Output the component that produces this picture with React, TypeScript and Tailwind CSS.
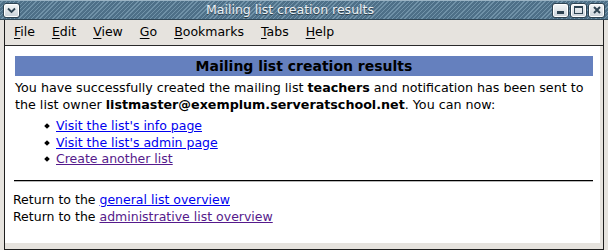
import React from 'react';

const menus = ['File', 'Edit', 'View', 'Go', 'Bookmarks', 'Tabs', 'Help'];

const links = [
  { label: "Visit the list's info page", visited: false },
  { label: "Visit the list's admin page", visited: false },
  { label: 'Create another list', visited: true },
];

function TitleButton({ children }: { children: React.ReactNode }) {
  return (
    <div className="w-[17px] h-[15px] rounded-[3px] border border-[#2e4352] bg-gradient-to-b from-[#f4f6f8] to-[#c9d1d8] flex items-center justify-center shadow-[inset_0_0_0_1px_#ffffff]">
      {children}
    </div>
  );
}

export default function App() {
  return (
    <div className="w-[608px] h-[250px] bg-[#e6e3de] overflow-hidden font-['DejaVu_Sans',sans-serif] text-black">
      {/* title bar */}
      <div className="h-[20px] flex items-center px-[3px] bg-[repeating-linear-gradient(135deg,#4e7088_0px,#4e7088_2px,#7092a8_2px,#7092a8_3px)] shadow-[inset_0_1px_0_#9bb4c4,inset_0_-1px_0_#2f4656]">
        <TitleButton>
          <svg width="9" height="7" viewBox="0 0 9 7">
            <path d="M1 1.5 L4.5 5 L8 1.5" stroke="#2e4352" strokeWidth="1.8" fill="none" />
          </svg>
        </TitleButton>
        <div className="flex-1 text-center text-[12.5px] text-[#eef3f6] [text-shadow:0_1px_0_#2c3e4a] leading-none pl-[8px]">
          Mailing list creation results
        </div>
        <div className="flex gap-[1px]">
          <TitleButton>
            <div className="w-[7px] h-[3px] bg-[#2e4352] mt-[5px]" />
          </TitleButton>
          <TitleButton>
            <div className="w-[9px] h-[8px] border border-[#2e4352] border-t-[2px]" />
          </TitleButton>
          <TitleButton>
            <svg width="8" height="8" viewBox="0 0 8 8">
              <path d="M1 1 L7 7 M7 1 L1 7" stroke="#2e4352" strokeWidth="2" />
            </svg>
          </TitleButton>
        </div>
      </div>

      {/* window body */}
      <div className="ml-[4px] w-[600px] h-[230px] border-l border-r border-b border-[#1e1e1e]">
        <div className="h-[26px] flex items-center gap-[17px] pl-[9px] text-[12.5px] border-b border-[#2a2a2a]">
          {menus.map((m) => (
            <span key={m}>
              <span className="underline underline-offset-2">{m[0]}</span>
              {m.slice(1)}
            </span>
          ))}
        </div>

        <div className="h-[197px] mr-[3px] bg-white text-[12.5px] pl-[10px] pr-[7px] pt-[10px]">
          <div className="h-[20px] bg-[#6580be] flex items-center justify-center font-bold text-[14px]">
            Mailing list creation results
          </div>
          <p className="mt-[3px] leading-[17px] text-[12.7px]">
            You have successfully created the mailing list <b>teachers</b> and notification has been sent to
            the list owner <b>listmaster@exemplum.serveratschool.net</b>. You can now:
          </p>
          <ul className="mt-[5px] leading-[16.5px] pl-[30px]">
            {links.map((l) => (
              <li key={l.label} className="flex items-center gap-[7px]">
                <span className="w-[4px] h-[4px] bg-black rotate-45 shrink-0" />
                <a href="#" className={`underline ${l.visited ? 'text-[#551a8b]' : 'text-[#0000ee]'}`}>
                  {l.label}
                </a>
              </li>
            ))}
          </ul>
          <div className="mt-[12px] -ml-[1px] border-t border-b border-t-black border-b-[#b8b8b8]" />
          <div className="mt-[9px] -ml-[2px] leading-[17px]">
            <div>
              Return to the <a href="#" className="underline text-[#0000ee]">general list overview</a>
            </div>
            <div>
              Return to the <a href="#" className="underline text-[#551a8b]">administrative list overview</a>
            </div>
          </div>
        </div>
      </div>
    </div>
  );
}
